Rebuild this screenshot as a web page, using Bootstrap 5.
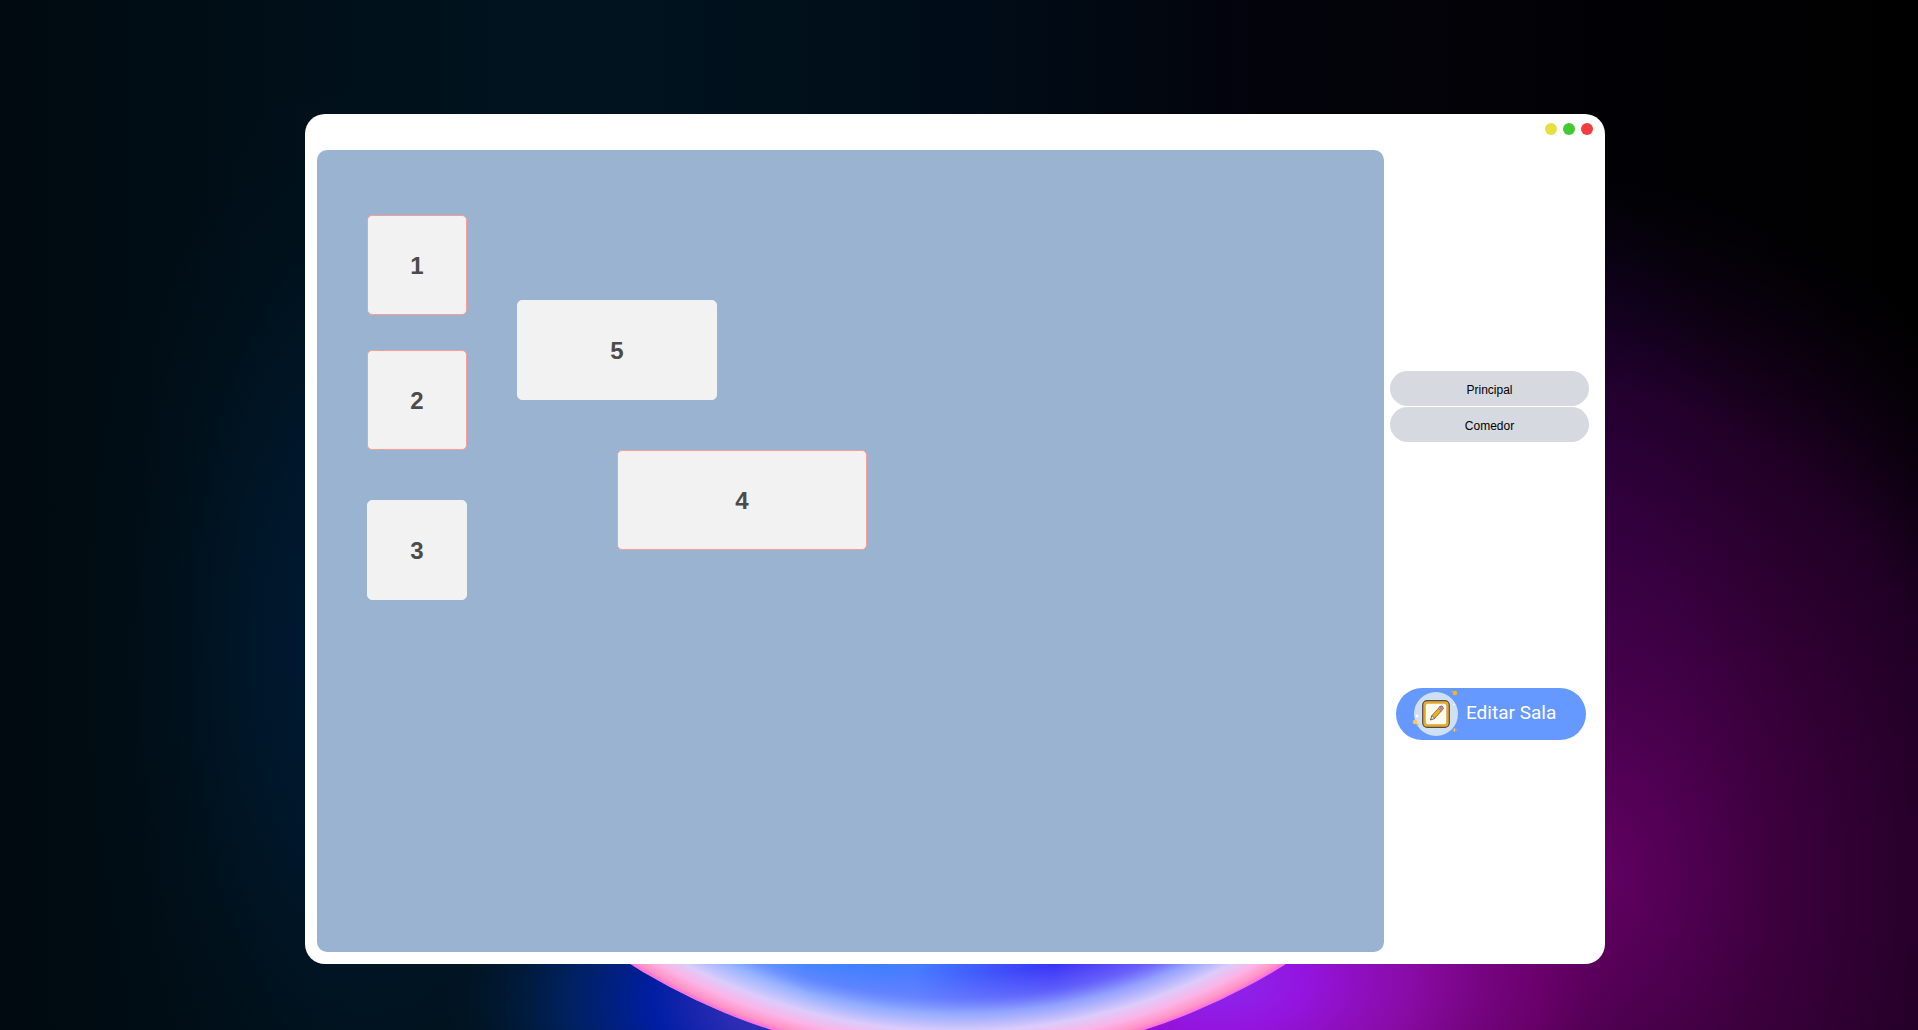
<!DOCTYPE html>
<html lang="es">
<head>
<meta charset="utf-8">
<meta name="viewport" content="width=device-width, initial-scale=1">
<title>Salas</title>
<link href="https://cdn.jsdelivr.net/npm/bootstrap@5.3.0/dist/css/bootstrap.min.css" rel="stylesheet">
<style>
body{background:#00060c;font-family:"Liberation Sans",Arial,sans-serif;}
.wallpaper{z-index:-1;}
.desktop{padding:114px 313px 66px 305px;}
.app-window{border-radius:20px;}
.titlebar{height:36px;padding:9px 12px 0 0;gap:6px;}
.dot{width:12px;height:12px;border:0;padding:0;border-radius:50%;}
.dot-min{background:#e4e042;}
.dot-max{background:#43ca33;}
.dot-close{background:#f13d3d;}
.room{background:#99b3d1;border-radius:10px;margin:0 0 12px 12px;}
.mesa{position:absolute;width:100px;height:100px;background:#f2f2f2;border:1px solid #f2f2f2;border-radius:5px;color:#4b4b4b;font-size:24px;font-weight:700;padding:2px 0 0 0;}
.mesa.busy{border-color:#ff9b94;}
.m1{left:50px;top:65px}
.m2{left:50px;top:200px}
.m3{left:50px;top:350px}
.m4{left:300px;top:300px;width:250px}
.m5{left:200px;top:150px;width:200px}
.side{width:221px;padding:221px 16px 0 6px;}
.sala{height:35px;border:0;border-radius:18px;background:#d6d9e0;color:#000;font-size:12px;padding:2px 0 0 0;}
.salas{gap:1px;}
.editar{margin:246px 3px 0 6px;height:52px;padding:0 0 2px 16px;gap:8px;border:0;border-radius:26px;background:#6699ff;color:#fff;font:400 19px/24px Roboto,sans-serif;}
</style>
</head>
<body>
<svg class="wallpaper position-fixed top-0 start-0 w-100 h-100" viewBox="0 0 1918 1030" preserveAspectRatio="xMidYMid slice" aria-hidden="true">
<defs>
<linearGradient id="base" x1="0" x2="1"><stop offset="0" stop-color="#000a10"/><stop offset=".3" stop-color="#001420"/><stop offset=".5" stop-color="#000d18"/><stop offset=".66" stop-color="#03030b"/><stop offset="1" stop-color="#000"/></linearGradient>
<radialGradient id="navy"><stop offset="0" stop-color="#001c38"/><stop offset=".4" stop-color="#00182c" stop-opacity=".8"/><stop offset="1" stop-color="#001018" stop-opacity="0"/></radialGradient>
<radialGradient id="blue"><stop offset="0" stop-color="#3a38d0"/><stop offset=".3" stop-color="#2c2cb4"/><stop offset=".48" stop-color="#001ea4"/><stop offset=".7" stop-color="#00246c" stop-opacity=".8"/><stop offset="1" stop-color="#001a30" stop-opacity="0"/></radialGradient>
<radialGradient id="violet"><stop offset="0" stop-color="#24007c"/><stop offset=".5" stop-color="#20005c" stop-opacity=".7"/><stop offset="1" stop-color="#0a0030" stop-opacity="0"/></radialGradient>
<radialGradient id="plum"><stop offset="0" stop-color="#640064"/><stop offset=".3" stop-color="#480048" stop-opacity=".9"/><stop offset=".7" stop-color="#2a0030" stop-opacity=".75"/><stop offset="1" stop-color="#100018" stop-opacity="0"/></radialGradient>
<radialGradient id="magenta"><stop offset="0" stop-color="#8a28f0"/><stop offset=".2" stop-color="#9414de"/><stop offset=".45" stop-color="#920cb0" stop-opacity=".9"/><stop offset=".75" stop-color="#780078" stop-opacity=".65"/><stop offset="1" stop-color="#500050" stop-opacity="0"/></radialGradient>
<linearGradient id="core" gradientUnits="userSpaceOnUse" x1="650" x2="1280" y1="0" y2="0"><stop offset="0" stop-color="#6cbcff"/><stop offset=".12" stop-color="#52acff"/><stop offset=".25" stop-color="#3684ff"/><stop offset=".42" stop-color="#487cff"/><stop offset=".64" stop-color="#3a34f6"/><stop offset=".8" stop-color="#5a38f4"/><stop offset="1" stop-color="#8c70ff"/></linearGradient>
<radialGradient id="rim" gradientUnits="userSpaceOnUse" cx="958" cy="446" r="613"><stop offset=".86" stop-color="#7880ff" stop-opacity="0"/><stop offset=".9" stop-color="#8088ff" stop-opacity=".5"/><stop offset=".925" stop-color="#a0b4ff" stop-opacity=".85"/><stop offset=".955" stop-color="#dcccfb"/><stop offset=".975" stop-color="#fbb4e8"/><stop offset=".992" stop-color="#ff94c4"/><stop offset="1" stop-color="#ff68e0"/></radialGradient>
<radialGradient id="cyan"><stop offset="0" stop-color="#7cc8ff"/><stop offset="1" stop-color="#7cc8ff" stop-opacity="0"/></radialGradient>
</defs>
<rect width="1918" height="1030" fill="url(#base)"/>
<ellipse cx="350" cy="650" rx="270" ry="620" fill="url(#navy)"/>
<ellipse cx="850" cy="1000" rx="410" ry="230" fill="url(#blue)"/>
<ellipse cx="1560" cy="720" rx="230" ry="540" fill="url(#violet)"/>
<ellipse cx="1590" cy="880" rx="540" ry="700" fill="url(#plum)"/>
<ellipse cx="1220" cy="980" rx="430" ry="260" fill="url(#magenta)"/>
<path d="M345 446a613 613 0 0 0 1226 0z" fill="url(#core)"/>
<ellipse cx="750" cy="985" rx="130" ry="22" transform="rotate(25 750 985)" fill="url(#cyan)"/>
<path d="M345 446a613 613 0 0 0 1226 0z" fill="url(#rim)"/>
</svg>
<div class="desktop d-flex min-vh-100">
<main class="app-window bg-white flex-grow-1 d-flex flex-column">
<header class="titlebar d-flex justify-content-end">
<button class="dot dot-min" type="button" aria-label="Minimizar"></button>
<button class="dot dot-max" type="button" aria-label="Maximizar"></button>
<button class="dot dot-close" type="button" aria-label="Cerrar"></button>
</header>
<div class="d-flex flex-grow-1">
<section class="room position-relative flex-grow-1" aria-label="Mesas">
<button class="mesa busy m1" type="button">1</button>
<button class="mesa busy m2" type="button">2</button>
<button class="mesa m3" type="button">3</button>
<button class="mesa busy m4" type="button">4</button>
<button class="mesa m5" type="button">5</button>
</section>
<aside class="side flex-shrink-0 d-flex flex-column">
<nav class="salas d-flex flex-column" aria-label="Salas">
<button class="sala" type="button">Principal</button>
<button class="sala" type="button">Comedor</button>
</nav>
<button class="editar d-flex align-items-center" type="button">
<svg width="46" height="50" viewBox="0 0 46 50" aria-hidden="true">
<circle cx="24" cy="26" r="22" fill="#cde0f4"/>
<rect x="10.700" y="12.700" width="26.600" height="26.600" rx="4.500" fill="#eab020" stroke="#5d4350" stroke-width="1.200"/>
<rect x="13.300" y="15.300" width="21.400" height="21.400" rx="2.500" fill="#fffbee" stroke="#a8741c" stroke-width=".5"/>
<g transform="rotate(42 24 26)" stroke="#5d4350" stroke-width=".6"><path d="M22 20h4v10l-2 4-2-4z" fill="#eab020"/><path d="M22 18.500h4V20h-4z" fill="#d8dde8"/><path d="M22 18.500v-1.500q2-2 4 0v1.500z" fill="#f38a98"/><path d="M22 30h4l-2 4z" fill="#ffe8c4"/></g>
<circle cx="43" cy="5" r="2.300" fill="#f5b51c"/><circle cx="40" cy="3.500" r=".7" fill="#f5b51c"/>
<circle cx="3" cy="34" r="2.300" fill="#fbc74e"/><circle cx="6" cy="36.500" r=".8" fill="#f5b51c"/><circle cx="5" cy="28" r="1.500" fill="#fff"/><circle cx="42" cy="16.500" r=".8" fill="#fff"/>
<path d="M42.500 40v4m-2-2h4" stroke="#e9c16b"/><circle cx="2" cy="13" r="1" fill="#6f94d8"/><circle cx="9" cy="48" r="1" fill="#6f94d8"/><circle cx="45" cy="10" r="1" fill="#6f94d8"/>
</svg>
<span>Editar Sala</span>
</button>
</aside>
</div>
</main>
</div>
<script src="https://cdn.jsdelivr.net/npm/bootstrap@5.3.0/dist/js/bootstrap.bundle.min.js"></script>
</body>
</html>
